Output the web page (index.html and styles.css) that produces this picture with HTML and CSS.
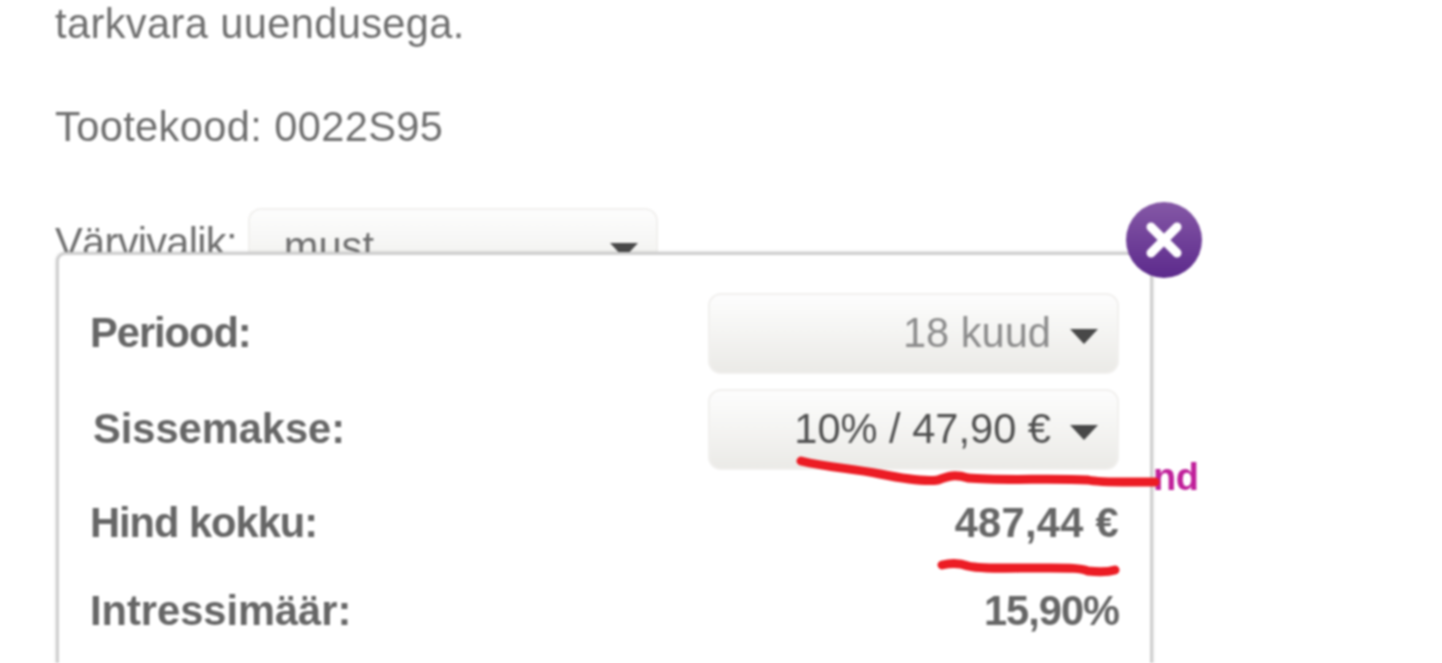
FILE: index.html
```html
<!DOCTYPE html>
<html lang="et">
<head>
  <meta charset="UTF-8" />
  <meta name="viewport" content="width=device-width, initial-scale=1.0"/>
  <title>Järelmaks</title>
  <link rel="stylesheet" href="styles.css">
</head>
<body>
  <div class="page">
    <p class="text">tarkvara uuendusega.</p>
    <p class="text">Tootekood: 0022S95</p>

    <div class="color-row">
      <span class="color-label">Värvivalik:</span>
      <div class="select select-color">
        <span>must</span>
        <i class="arrow"></i>
      </div>
    </div>

    <span class="price-tail">nd</span>

    <div class="popup">
      <button class="close-button" aria-label="Sulge">
        <svg viewBox="0 0 40 40" width="40" height="40">
          <path d="M7 7 L33 33 M33 7 L7 33" stroke="#fff" stroke-width="9" stroke-linecap="round" fill="none"/>
        </svg>
      </button>

      <div class="select-row">
        <span class="label tight">Periood:</span>
        <div class="select select-wide muted">
          <span>18 kuud</span>
          <i class="arrow"></i>
        </div>
      </div>

      <div class="select-row select-row-second">
        <span class="label label-shifted">Sissemakse:</span>
        <div class="select select-wide">
          <span>10% / 47,90 €</span>
          <i class="arrow"></i>
        </div>
      </div>

      <div class="value-row value-row-first">
        <span class="label tight">Hind kokku:</span>
        <span class="value">487,44 €</span>
      </div>

      <div class="value-row">
        <span class="label">Intressimäär:</span>
        <span class="value tight">15,90%</span>
      </div>
    </div>

    <svg class="scribbles" viewBox="0 0 1442 663" width="1442" height="663">
      <path d="M801 461 C830 468 850 468 880 474 C905 479 925 482 938 480 C948 476 955 474 968 478 C1000 481 1050 478 1088 480 C1100 483 1130 482 1155 482" />
      <path d="M942 565 C950 563 960 563 968 566 C980 569 1000 568 1050 568 C1070 568 1080 568 1088 571 C1098 572 1108 572 1115 570" />
    </svg>
  </div>
</body>
</html>
```

FILE: styles.css
```css
* {
  margin: 0;
  padding: 0;
  box-sizing: border-box;
}

html, body {
  height: 100%;
  overflow: hidden;
  background-color: #fff;
}

body {
  font-family: "Liberation Sans", Arial, sans-serif;
  font-size: 41.6px;
  line-height: 51px;
  color: #6f6f6f;
}

.page {
  position: relative;
  height: 663px;
  overflow: hidden;
  padding-left: 55px;
  filter: blur(0.9px);
}

.text {
  position: relative;
  margin-bottom: 52px;
  letter-spacing: 0.37px;
}

.text:first-child {
  margin-top: -2px;
}

.color-row {
  display: flex;
  align-items: flex-start;
  gap: 11px;
  margin-top: 56px;
}

.color-label {
  margin-top: 9px;
  letter-spacing: -0.7px;
}

.select {
  display: flex;
  align-items: center;
  height: 81px;
  padding-bottom: 3px;
  border: 2px solid #f1f0ee;
  border-radius: 13px;
  background: linear-gradient(#fdfdfd, #f5f5f3 45%, #ebeae7);
  color: #505050;
}

.select-color {
  width: 410px;
  height: 90px;
  padding: 0 18px 14px 34px;
  justify-content: space-between;
  color: #6f6f6f;
}

.select-wide {
  width: 411px;
  justify-content: flex-end;
  padding-right: 19px;
  gap: 19px;
}

.muted {
  color: #8c8c8c;
}

.arrow {
  width: 0;
  height: 0;
  margin-top: 9px;
  border-left: 14px solid transparent;
  border-right: 14px solid transparent;
  border-top: 15px solid #484848;
}

.price-tail {
  position: absolute;
  left: 1153px;
  top: 452px;
  font-weight: bold;
  font-size: 38px;
  letter-spacing: -0.5px;
  color: #c0209a;
}

.popup {
  position: absolute;
  left: 56px;
  top: 252px;
  width: 1097px;
  height: 520px;
  padding: 38px 31px 0 31px;
  background-color: #fff;
  border: 3px solid #cfcfcf;
  border-radius: 9px;
  box-shadow: 0 0 3px rgba(0, 0, 0, 0.2);
  color: #666;
}

.close-button {
  position: absolute;
  top: -53px;
  right: -52px;
  width: 76px;
  height: 76px;
  display: flex;
  align-items: center;
  justify-content: center;
  border: none;
  border-radius: 50%;
  background: linear-gradient(#8558a6, #5c2a8c);
}

.select-row,
.value-row {
  display: flex;
  align-items: center;
  justify-content: space-between;
}

.select-row .label {
  margin-bottom: 2px;
}

.select-row-second {
  margin-top: 15px;
}

.value-row {
  height: 88px;
}

.value-row-first {
  margin-top: 8px;
}

.label,
.value {
  font-weight: bold;
}

.value {
  letter-spacing: 0.3px;
}

.tight {
  letter-spacing: -1px;
}

.label-shifted {
  margin-left: 3px;
}

.scribbles {
  position: absolute;
  left: 0;
  top: 0;
  fill: none;
  stroke: #ec1c24;
  stroke-width: 9;
  stroke-linecap: round;
}
```
